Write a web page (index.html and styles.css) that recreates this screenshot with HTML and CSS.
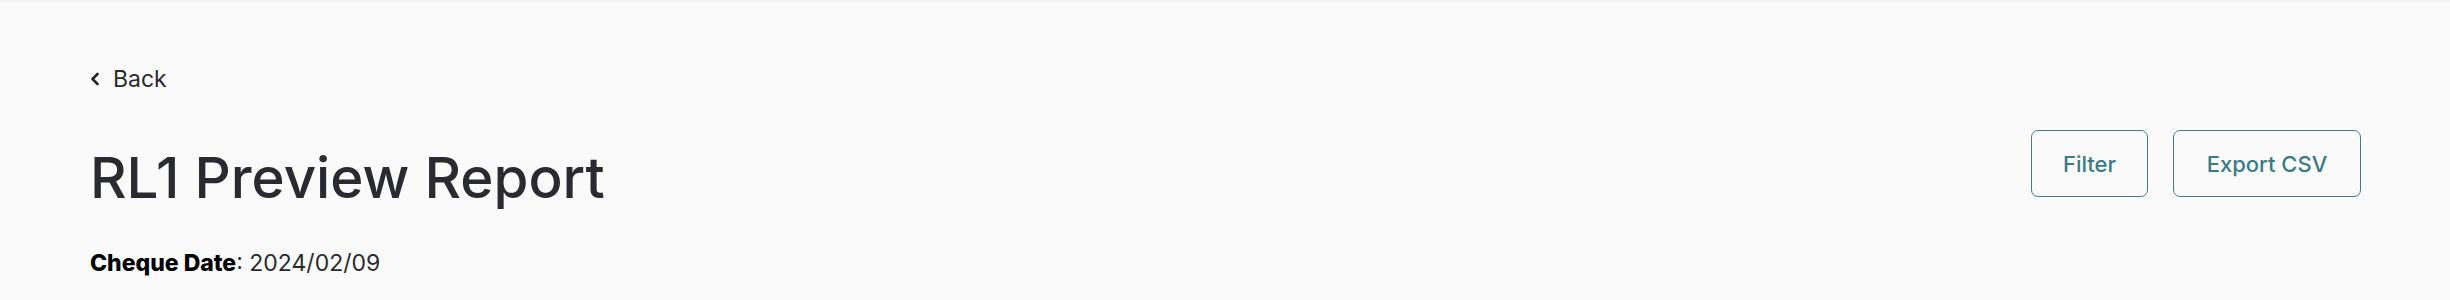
FILE: index.html
```html
<!DOCTYPE html>
<html lang="en">
<head>
<meta charset="utf-8">
<title>RL1 Preview Report</title>
<link rel="stylesheet" href="styles.css">
</head>
<body>
<div class="page">
  <a class="back" href="#">
    <svg class="chev" width="10" height="14" viewBox="0 0 10 14" aria-hidden="true"><polyline points="7.5,2 2.5,7 7.5,12" fill="none" stroke="#222327" stroke-width="2.6" stroke-linecap="round" stroke-linejoin="round"/></svg>
    <span>Back</span>
  </a>
  <div class="header">
    <h1 class="title">RL1 Preview Report</h1>
    <div class="actions">
      <button class="btn btn-filter">Filter</button>
      <button class="btn btn-export">Export CSV</button>
    </div>
  </div>
  <p class="meta"><strong>Cheque Date</strong>: 2024/02/09</p>
</div>
</body>
</html>
```
FILE: styles.css
```css
html, body {
  margin: 0;
  padding: 0;
}
body {
  background: #fafafa;
  border-top: 2px solid #f2f2f2;
  font-family: Inter, "Noto Sans", sans-serif;
  color: #2a2b30;
  height: 298px;
  overflow: hidden;
}
.page {
  padding: 0 89px 0 90px;
}
.back {
  display: flex;
  align-items: center;
  gap: 13px;
  margin-top: 60px;
  height: 34px;
  color: #2a2b30;
  text-decoration: none;
  font-size: 23px;
  line-height: 34px;
}
.header {
  display: flex;
  justify-content: space-between;
  align-items: flex-start;
  margin-top: 34px;
}
.title {
  margin: 14px 0 0;
  font-size: 56.5px;
  font-weight: 500;
  line-height: 67px;
}
.actions {
  display: flex;
  gap: 25px;
}
.btn {
  font-family: Inter, "Noto Sans", sans-serif;
  font-size: 22px;
  font-weight: 500;
  color: #3a7b88;
  background: transparent;
  border: 1.5px solid #3f7f8c;
  border-radius: 7px;
  height: 67px;
  padding: 0;
  cursor: pointer;
}
.btn-filter { width: 117px; }
.btn-export { width: 188px; }
.meta {
  margin: 35px 0 0;
  font-size: 23px;
  line-height: 34px;
  color: #2a2b30;
}
.meta strong {
  font-weight: 800;
  color: #000;
}
```
